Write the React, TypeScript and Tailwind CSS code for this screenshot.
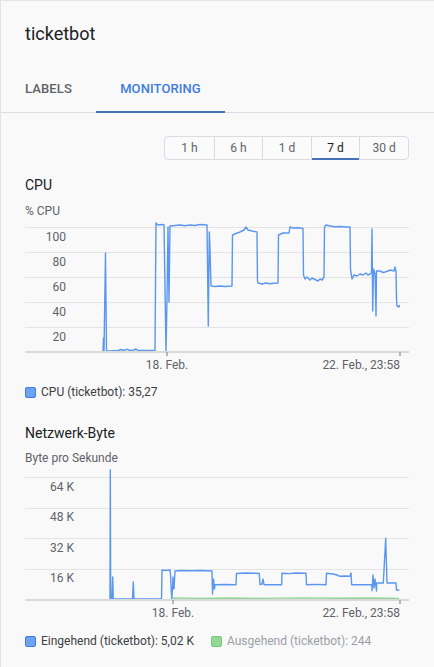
import React from 'react';

type Pt = [number, number];

const cpuPoints: Pt[] = [
  [103, 352], [103.5, 339], [104, 352], [105.5, 254], [106.5, 352],
  [110, 352], [118, 351.5], [121, 350.5], [124, 351.5], [127, 350.2], [130, 351.5], [134, 351], [136, 350], [138, 351.5], [150, 351.5], [155, 351.5],
  [156, 224], [158, 226], [163, 225.5], [164, 226], [166, 352], [167, 300], [168, 228], [169, 303], [170, 227],
  [175, 226.5], [180, 226], [185, 226.8], [190, 226], [195, 226.5], [200, 225.5], [207, 226],
  [208.3, 327], [209.3, 233], [210, 250], [211, 287],
  [215, 287.5], [220, 287], [225, 287.5], [232, 287],
  [232.5, 236], [236, 234.5], [240, 233], [244, 231], [246, 228], [248, 231], [252, 232], [257, 233],
  [257.5, 282], [258, 284], [262, 285], [266, 284], [270, 284.8], [274, 284.2], [278, 284],
  [278.5, 236], [283, 234], [289, 234], [290, 228], [293, 229], [298, 228.8], [303, 229.5],
  [303.5, 276], [305, 280], [307, 278], [310, 281], [312, 279], [314, 280], [318, 282], [320, 280], [322, 281], [324, 278],
  [324.5, 228], [326, 226], [330, 227], [335, 227.8], [340, 227.5], [345, 228], [350, 228],
  [350.5, 270], [352, 280], [354, 276], [357, 277], [360, 275], [363, 276], [366, 274], [368, 276], [370, 275], [371.5, 274],
  [372, 230], [372.7, 312], [373.5, 270], [375, 275], [376, 317], [376.5, 272], [380, 272], [383, 273.5], [385, 273], [388, 272], [390, 271], [394, 272], [395, 268], [396, 272],
  [396.5, 300], [397, 307], [399, 308], [399.5, 306],
];

const inPoints: Pt[] = [
  [110, 600], [110.3, 471], [110.7, 600], [112, 600], [112.7, 578], [113.3, 600], [120, 600], [132.5, 600], [133.3, 583], [134, 600], [150, 600], [161.5, 600],
  [162, 571], [165, 571.5], [170, 571], [170.5, 575], [171.7, 600], [172.5, 590], [173, 578], [174, 590], [175, 572], [180, 571.5], [190, 571.8], [200, 571.5], [212, 572],
  [212.5, 595], [213.5, 580], [214.5, 590], [215, 585.7], [225, 585.5], [236, 585.7],
  [236.5, 574.5], [245, 574], [255, 574.3], [259.3, 574.5], [260, 585.7], [262, 585], [263, 580], [264, 585.7], [281.7, 585.7],
  [282, 574.3], [290, 574.6], [295, 574], [306, 574.3], [306.5, 585.7], [316, 585.4], [326, 585.7],
  [326.5, 574.3], [333, 575], [337, 576], [340, 577.3], [345, 577], [350, 577.3], [351, 574], [351.7, 585.7], [371.7, 585.7],
  [372, 591.7], [373, 576], [374, 589], [375, 580], [376.5, 592], [376.7, 584], [383.3, 584], [385.7, 539.3], [387, 584], [396, 584], [396.5, 591], [399.3, 591],
];

const outPoints: Pt[] = [
  [172, 599], [200, 599.4], [230, 599], [260, 599.4], [300, 598.9], [340, 599.3], [370, 599], [399, 599.4],
];

const toStr = (pts: Pt[]) => pts.map(([x, y]) => `${x},${y}`).join(' ');

const ranges = ['1 h', '6 h', '1 d', '7 d', '30 d'];

const Chart = ({
  top,
  height,
  grid,
  labels,
  labelX,
  baseY,
  ticks,
  children,
}: {
  top: number;
  height: number;
  grid: number[];
  labels: { y: number; t: string }[];
  labelX: number;
  baseY: number;
  ticks: { x: number; t: string; anchor: 'middle' | 'end' }[];
  children: React.ReactNode;
}) => (
  <svg
    width={384}
    height={height}
    viewBox={`25 ${top} 384 ${height}`}
    className="block"
    fontFamily="Roboto, 'Liberation Sans', sans-serif"
  >
    {grid.map((y) => (
      <line key={y} x1={25} x2={409} y1={y + 0.5} y2={y + 0.5} stroke="#e4e4e4" strokeWidth={1} />
    ))}
    {labels.map((l) => (
      <text key={l.t} x={labelX} y={l.y} fontSize={12} fill="#5f6368" textAnchor="end">
        {l.t}
      </text>
    ))}
    {children}
    <rect x={25} y={baseY} width={384} height={2} fill="#d9d9d9" />
    {ticks.map((tk) => (
      <g key={tk.t}>
        <rect x={tk.x - 0.75} y={baseY + 1} width={1.5} height={4} fill="#9e9e9e" />
        <text
          x={tk.anchor === 'end' ? tk.x : tk.x}
          y={baseY + 18}
          fontSize={12}
          fill="#5f6368"
          textAnchor={tk.anchor}
        >
          {tk.t}
        </text>
      </g>
    ))}
  </svg>
);

export default function App() {
  return (
    <div className="min-h-[667px] bg-[#f9f9fa] border-t border-l border-[#e3e3e3] font-['Roboto','Liberation_Sans',sans-serif] text-[#202124]">
      <div className="pt-[21px] pl-6">
        <h1 className="text-[18px] leading-6 font-normal">ticketbot</h1>
      </div>

      <div className="mt-[19px] flex h-12 border-b border-[#dadce0]">
        <button className="w-[95px] h-12 text-[13px] font-medium text-[#5f6368] tracking-[0.1px]">LABELS</button>
        <button className="relative w-[129px] h-12 text-[13px] font-medium text-[#3f7ce0] tracking-[0.1px]">
          MONITORING
          <span className="absolute left-0 right-0 bottom-0 h-[2px] bg-[#4670b8]" />
        </button>
      </div>

      <div className="pl-6 pr-[25px]">
        <div className="mt-[23px] flex justify-end">
          <div className="flex border border-[#dadce0] rounded-sm bg-[#fbfbfb]">
            {ranges.map((r, i) => (
              <div
                key={r}
                className={`relative w-[48.6px] h-[22px] flex items-center justify-center text-[12px] ${
                  i > 0 ? 'border-l border-[#dadce0]' : ''
                } ${r === '7 d' ? 'text-[#202124]' : 'text-[#5f6368]'}`}
              >
                {r}
                {r === '7 d' && <span className="absolute left-0 right-0 bottom-[-1px] h-[2px] bg-[#4670b8]" />}
              </div>
            ))}
          </div>
        </div>

        <h2 className="mt-[15px] text-[14px] leading-5 font-normal">CPU</h2>
        <div className="mt-2 text-[12px] leading-4 text-[#5f6368]">% CPU</div>
        <Chart
          top={220}
          height={152}
          grid={[228, 253, 278, 303, 328]}
          labels={[
            { y: 241.5, t: '100' },
            { y: 266.5, t: '80' },
            { y: 291.5, t: '60' },
            { y: 316.5, t: '40' },
            { y: 341.5, t: '20' },
          ]}
          labelX={66}
          baseY={352}
          ticks={[
            { x: 167, t: '18. Feb.', anchor: 'middle' },
            { x: 400, t: '22. Feb., 23:58', anchor: 'end' },
          ]}
        >
          <polyline points={toStr(cpuPoints)} fill="none" stroke="#5b97ef" strokeWidth={1.4} strokeLinejoin="round" />
        </Chart>
        <div className="mt-[13px] flex items-center h-4 text-[12px] text-[#3c4043]">
          <span className="w-[11px] h-[11px] rounded-[2px] border border-[#3f7be0] bg-[#6da3f3] mr-[5px]" />
          CPU (ticketbot): 35,27
        </div>

        <h2 className="mt-[23px] text-[14px] leading-5 font-normal">Netzwerk-Byte</h2>
        <div className="mt-[7px] text-[12px] leading-4 text-[#5f6368]">Byte pro Sekunde</div>
        <Chart
          top={467}
          height={155}
          grid={[478, 509, 539, 570]}
          labels={[
            { y: 491.5, t: '64 K' },
            { y: 521.5, t: '48 K' },
            { y: 552.5, t: '32 K' },
            { y: 582.5, t: '16 K' },
          ]}
          labelX={74}
          baseY={600}
          ticks={[
            { x: 173, t: '18. Feb.', anchor: 'middle' },
            { x: 400, t: '22. Feb., 23:58', anchor: 'end' },
          ]}
        >
          <polyline points={toStr(outPoints)} fill="none" stroke="#93d493" strokeWidth={1.4} />
          <polyline points={toStr(inPoints)} fill="none" stroke="#5b97ef" strokeWidth={1.4} strokeLinejoin="round" />
        </Chart>
        <div className="mt-3 flex items-center h-4 text-[12px]">
          <span className="w-[11px] h-[11px] rounded-[2px] border border-[#3f7be0] bg-[#6da3f3] mr-[5px]" />
          <span className="text-[#3c4043]">Eingehend (ticketbot): 5,02 K</span>
          <span className="ml-[17px] w-[11px] h-[11px] rounded-[2px] border border-[#76c878] bg-[#93d995] mr-[5px]" />
          <span className="text-[#9aa0a6]">Ausgehend (ticketbot): 244</span>
        </div>
      </div>
    </div>
  );
}
